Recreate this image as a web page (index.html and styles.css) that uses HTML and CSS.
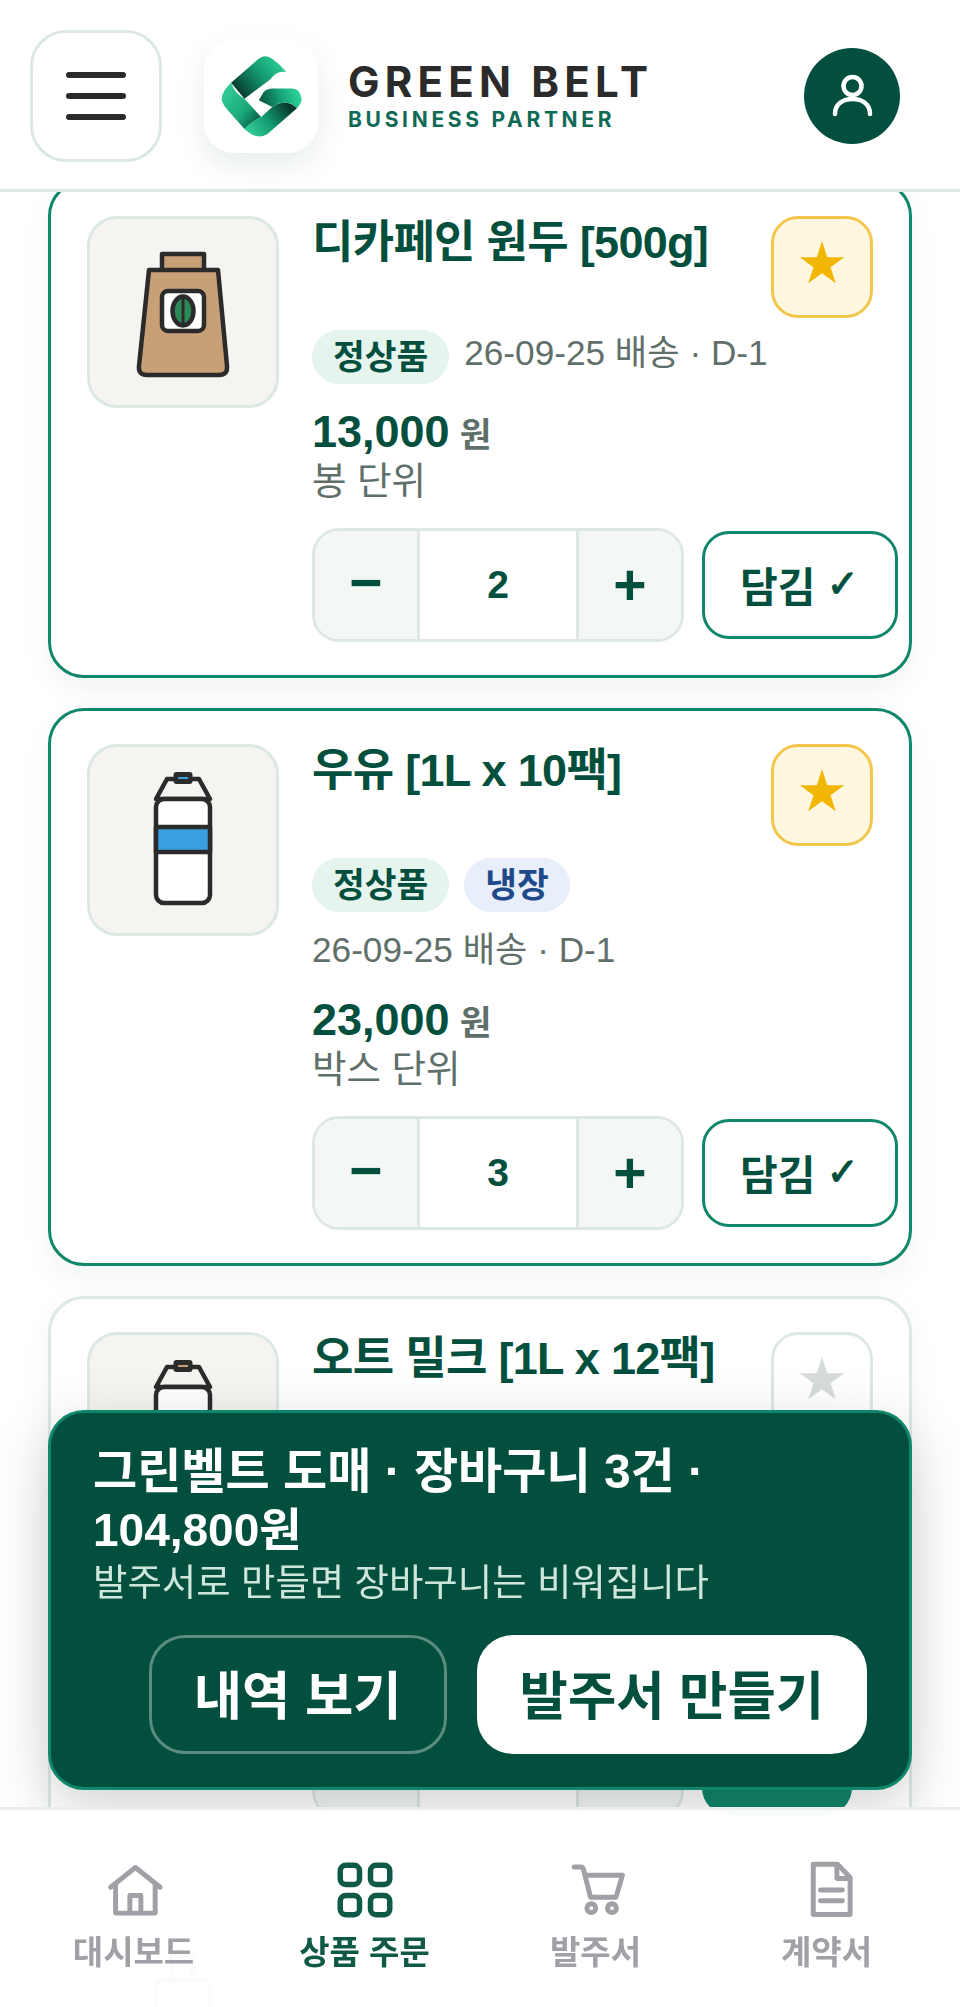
FILE: index.html
```html
<!DOCTYPE html>
<html lang="ko">

<head>
    <meta charset="UTF-8">
    <meta name="viewport" content="width=device-width, initial-scale=1.0">
    <title>Green Belt - 상품 주문</title>
    <link rel="stylesheet" href="styles.css">
</head>

<body>
    <header class="top-bar">
        <button class="menu-button" aria-label="메뉴">
            <span></span>
            <span></span>
            <span></span>
        </button>
        <div class="logo-tile">
            <svg width="81" height="81" viewBox="95 80 242 242">
                <defs>
                    <linearGradient id="gTop" gradientUnits="userSpaceOnUse" x1="270" y1="90" x2="145" y2="190">
                        <stop offset="0" stop-color="#2ecf98" />
                        <stop offset="0.45" stop-color="#149a72" />
                        <stop offset="1" stop-color="#07392c" />
                    </linearGradient>
                    <linearGradient id="gLeft" gradientUnits="userSpaceOnUse" x1="105" y1="200" x2="205" y2="275">
                        <stop offset="0" stop-color="#2fc793" />
                        <stop offset="0.6" stop-color="#1aa87a" />
                        <stop offset="1" stop-color="#0b5f48" />
                    </linearGradient>
                    <linearGradient id="gBottom" gradientUnits="userSpaceOnUse" x1="190" y1="315" x2="300" y2="235">
                        <stop offset="0" stop-color="#2fc793" />
                        <stop offset="0.45" stop-color="#149a72" />
                        <stop offset="1" stop-color="#07392c" />
                    </linearGradient>
                    <linearGradient id="gArm" gradientUnits="userSpaceOnUse" x1="330" y1="190" x2="220" y2="225">
                        <stop offset="0" stop-color="#2ed69c" />
                        <stop offset="0.55" stop-color="#169c74" />
                        <stop offset="1" stop-color="#0a5a44" />
                    </linearGradient>
                </defs>
                <path d="M125 160 L200 95 Q225 70 250 90 Q272 106 290 128 Q262 122 240 152 L165 208 Z" fill="url(#gTop)" />
                <path d="M125 160 Q92 192 98 215 Q103 230 118 245 L165 298 Q195 270 215 262 L165 208 Q135 190 125 160 Z" fill="url(#gLeft)" />
                <path d="M165 298 Q190 322 215 320 Q230 318 245 303 L322 236 Q305 218 280 220 Q262 222 248 232 L215 262 Q190 270 165 298 Z" fill="url(#gBottom)" />
                <path d="M208 212 L222 188 Q230 178 250 177 H308 Q332 178 336 208 Q336 222 322 236 Q305 218 280 220 Q262 222 248 232 Z" fill="url(#gArm)" />
            </svg>
        </div>
        <div class="brand">
            <div class="brand-name">GREEN BELT</div>
            <div class="brand-sub">BUSINESS PARTNER</div>
        </div>
        <button class="avatar" aria-label="내 정보">
            <svg width="96" height="96" viewBox="0 0 96 96" fill="none" stroke="#fff" stroke-width="4.5" stroke-linecap="round">
                <circle cx="48.5" cy="38" r="9" />
                <path d="M31 66 C31 56 39 51 48.5 51 C58 51 66 56 66 66" />
            </svg>
        </button>
    </header>

    <main class="product-list">
        <article class="product in-cart">
            <div class="product-image">
                <svg width="186" height="186" viewBox="3 3 186 186" stroke="#2b2b2b" stroke-width="4.5" stroke-linejoin="round">
                    <rect x="75" y="38" width="42" height="18" fill="#c8a078" />
                    <path d="M62 54 H131 L140 150 Q141 159 132 159 H60 Q51 159 52 150 Z" fill="#c8a078" />
                    <rect x="75" y="75" width="42" height="40" rx="6" fill="#fff" />
                    <ellipse cx="96" cy="95" rx="10.5" ry="14.5" fill="#2a8a58" />
                    <path d="M96 82 V108" fill="none" stroke-width="3" />
                </svg>
            </div>
            <div class="product-info">
                <div class="title-row">
                    <h2 class="product-title">디카페인 원두 [500g]</h2>
                    <button class="star on">★</button>
                </div>
                <div class="tag-row">
                    <span class="tag">정상품</span>
                    <span class="delivery">26-09-25 배송 · D-1</span>
                </div>
                <div class="price">13,000 <small>원</small></div>
                <div class="unit">봉 단위</div>
                <div class="actions">
                    <div class="stepper">
                        <button>−</button>
                        <span class="count">2</span>
                        <button>+</button>
                    </div>
                    <button class="add done">담김 <span class="check">✓</span></button>
                </div>
            </div>
        </article>

        <article class="product in-cart">
            <div class="product-image">
                <svg width="186" height="186" viewBox="3 3 186 186" stroke="#2b2b2b" stroke-width="4.5" stroke-linejoin="round">
                    <path d="M69 55 L80 35 H112 L123 55 Z" fill="#f5f4f0" />
                    <rect x="86.5" y="28" width="19" height="12" rx="3" fill="#2b2b2b" stroke="none" />
                    <path d="M91 34 H101" stroke="#3a9fde" stroke-width="2" />
                    <rect x="69" y="55" width="54" height="104" rx="8" fill="#fff" />
                    <rect x="69" y="83" width="54" height="25" fill="#3a9fde" />
                </svg>
            </div>
            <div class="product-info">
                <div class="title-row">
                    <h2 class="product-title">우유 [1L x 10팩]</h2>
                    <button class="star on">★</button>
                </div>
                <div class="tag-row">
                    <span class="tag">정상품</span>
                    <span class="tag cold">냉장</span>
                    <span class="delivery">26-09-25 배송 · D-1</span>
                </div>
                <div class="price">23,000 <small>원</small></div>
                <div class="unit">박스 단위</div>
                <div class="actions">
                    <div class="stepper">
                        <button>−</button>
                        <span class="count">3</span>
                        <button>+</button>
                    </div>
                    <button class="add done">담김 <span class="check">✓</span></button>
                </div>
            </div>
        </article>

        <!-- the rows of this card sit behind the cart bar -->
        <article class="product">
            <div class="product-image">
                <svg width="186" height="186" viewBox="3 3 186 186" stroke="#2b2b2b" stroke-width="4.5" stroke-linejoin="round">
                    <path d="M69 55 L80 35 H112 L123 55 Z" fill="#f5f4f0" />
                    <rect x="86.5" y="28" width="19" height="12" rx="3" fill="#2b2b2b" stroke="none" />
                    <path d="M91 34 H101" stroke="#c8a078" stroke-width="2" />
                    <rect x="69" y="55" width="54" height="104" rx="8" fill="#fff" />
                    <rect x="69" y="83" width="54" height="25" fill="#c8a078" />
                </svg>
            </div>
            <div class="product-info">
                <div class="title-row">
                    <h2 class="product-title">오트 밀크 [1L x 12팩]</h2>
                    <button class="star">★</button>
                </div>
                <div class="covered-rows"></div>
                <div class="actions">
                    <div class="stepper">
                        <button aria-label="빼기"></button>
                        <span class="count"></span>
                        <button aria-label="더하기"></button>
                    </div>
                    <button class="add" aria-label="담기"></button>
                </div>
            </div>
        </article>

        <article class="product">
            <div class="product-image">
                <svg width="186" height="186" viewBox="3 3 186 186" stroke="#2b2b2b" stroke-width="4.5" stroke-linejoin="round">
                    <rect x="85" y="36" width="21" height="24" fill="#fff" />
                    <rect x="69" y="60" width="54" height="100" rx="8" fill="#fff" />
                </svg>
            </div>
        </article>
    </main>

    <section class="cart-bar">
        <div class="cart-title">그린벨트 도매 · 장바구니 3건 · <span class="cart-total">104,800원</span></div>
        <div class="cart-note">발주서로 만들면 장바구니는 비워집니다</div>
        <div class="cart-buttons">
            <button class="cart-history">내역 보기</button>
            <button class="cart-order">발주서 만들기</button>
        </div>
    </section>

    <nav class="bottom-nav">
        <a class="nav-item">
            <svg width="66" height="66" viewBox="0 0 24 24" fill="none" stroke="currentColor" stroke-width="1.8" stroke-linecap="round" stroke-linejoin="round">
                <path d="M3.5 11 L12.5 3.8 L21.5 11" />
                <path d="M5.3 10 V20.4 H19.7 V10" />
                <path d="M10.5 20.4 V14 H14.5 V20.4" />
            </svg>
            대시보드
        </a>
        <a class="nav-item active">
            <svg width="66" height="66" viewBox="0 0 24 24" fill="none" stroke="currentColor" stroke-width="2">
                <rect x="3" y="3" width="7" height="7" rx="2" />
                <rect x="14" y="3" width="7" height="7" rx="2" />
                <rect x="3" y="14" width="7" height="7" rx="2" />
                <rect x="14" y="14" width="7" height="7" rx="2" />
            </svg>
            상품 주문
        </a>
        <a class="nav-item">
            <svg width="66" height="66" viewBox="0 0 24 24" fill="none" stroke="currentColor" stroke-width="1.8" stroke-linecap="round" stroke-linejoin="round">
                <path d="M4 3.6 H6.5 Q7.2 3.6 7.4 4.4 L10 14.6 H19.3 L21.6 6.6 H8.2" />
                <circle cx="10.3" cy="18.6" r="1.6" />
                <circle cx="17.8" cy="18.6" r="1.6" />
            </svg>
            발주서
        </a>
        <a class="nav-item">
            <svg width="66" height="66" viewBox="0 0 24 24" fill="none" stroke="currentColor" stroke-width="1.8" stroke-linecap="round" stroke-linejoin="round">
                <path d="M7 2.6 H15.8 L20.4 7.4 V20.9 H7 Z" />
                <path d="M15.6 3 V7.8 H20" />
                <path d="M9.6 12 H17.6" />
                <path d="M9.6 15.9 H17.6" />
            </svg>
            계약서
        </a>
    </nav>
</body>

</html>
```

FILE: styles.css
```css
html,
body {
    height: 100%;
    margin: 0;
    overflow: hidden;
}

body {
    font-family: "Liberation Sans", "Noto Sans CJK KR", sans-serif;
    background-color: #fff;
    color: #034f3d;
}

button {
    font-family: inherit;
    padding: 0;
    cursor: pointer;
}

/* header */
.top-bar {
    position: fixed;
    top: 0;
    left: 0;
    right: 0;
    z-index: 5;
    display: flex;
    align-items: center;
    padding: 30px 60px 27px 30px;
    background: #fff;
    border-bottom: 3px solid #dde8e4;
}

.menu-button {
    width: 132px;
    height: 132px;
    display: flex;
    flex-direction: column;
    align-items: center;
    justify-content: center;
    gap: 15px;
    background: #fff;
    border: 3px solid #dde8e4;
    border-radius: 36px;
}

.menu-button span {
    width: 60px;
    height: 6px;
    background: #2b2b2b;
    border-radius: 3px;
}

.logo-tile {
    width: 114px;
    height: 114px;
    margin-left: 42px;
    display: flex;
    align-items: center;
    justify-content: center;
    background: #fff;
    border-radius: 30px;
    box-shadow: 0 12px 30px rgba(3, 79, 61, 0.1);
}

.brand {
    margin-left: 30px;
    font-family: Inter, sans-serif;
}

.brand-name {
    font-size: 42px;
    line-height: 46px;
    font-weight: 700;
    letter-spacing: 5.2px;
    color: #2b2b2b;
}

.brand-sub {
    font-size: 21px;
    line-height: 29px;
    font-weight: 700;
    letter-spacing: 3.7px;
    color: #0f6b55;
}

.avatar {
    width: 96px;
    height: 96px;
    margin-left: auto;
    display: flex;
    background: #034f3d;
    border: none;
    border-radius: 50%;
}

/* product cards */
.product-list {
    height: 100%;
    box-sizing: border-box;
    overflow: hidden;
    display: flex;
    flex-direction: column;
    gap: 30px;
    padding: 180px 48px 0;
}

.product {
    flex: none;
    display: flex;
    gap: 33px;
    padding: 33px 36px;
    background: #fff;
    border: 3px solid #dde8e4;
    border-radius: 36px;
    box-shadow: 0 12px 30px rgba(3, 79, 61, 0.06);
}

.product.in-cart {
    border-color: #10876a;
}

.product-image {
    flex: none;
    width: 186px;
    height: 186px;
    background: #f5f4f0;
    border: 3px solid #dde8e4;
    border-radius: 30px;
}

.product-image svg {
    display: block;
}

.product-info {
    flex: 1;
    min-width: 0;
}

.title-row {
    display: flex;
    justify-content: space-between;
    align-items: flex-start;
}

.product-title {
    margin: 0;
    font-size: 45px;
    line-height: 54px;
    font-weight: 700;
    letter-spacing: -0.7px;
}

.star {
    flex: none;
    width: 102px;
    height: 102px;
    padding-bottom: 8px;
    font-family: "DejaVu Sans", sans-serif;
    font-size: 58px;
    color: #d5dcd9;
    background: #fff;
    border: 3px solid #dde8e4;
    border-radius: 27px;
}

.star.on {
    color: #f2b705;
    background: #fff7e0;
    border-color: #f3c64d;
}

.tag-row {
    display: flex;
    flex-wrap: wrap;
    align-items: flex-start;
    gap: 15px;
    margin-top: 12px;
}

.tag {
    height: 54px;
    padding: 0 21px;
    font-size: 34.5px;
    line-height: 54px;
    font-weight: 700;
    background: #e6f4ee;
    border-radius: 27px;
}

.tag.cold {
    color: #1f4a8a;
    background: #e8effb;
}

.delivery {
    font-size: 35.2px;
    line-height: 45px;
    color: #5f6f6a;
}

.price {
    margin-top: 21px;
    font-size: 45px;
    line-height: 54px;
    font-weight: 700;
}

.price small {
    margin-left: -2.5px;
    font-size: 34.5px;
    line-height: 1;
    color: #5f6f6a;
}

.unit {
    font-size: 37.5px;
    line-height: 45px;
    color: #5f6f6a;
}

.covered-rows {
    height: 246px;
}

.actions {
    display: flex;
    align-items: center;
    gap: 18px;
    margin-top: 24px;
}

.stepper {
    flex: none;
    width: 372px;
    height: 114px;
    box-sizing: border-box;
    display: flex;
    background: #fff;
    border: 3px solid #dde8e4;
    border-radius: 27px;
    overflow: hidden;
}

.stepper button {
    flex: none;
    width: 102px;
    font-size: 57px;
    font-weight: 700;
    color: #034f3d;
    background: #f3f7f5;
    border: none;
}

.stepper button:first-child {
    padding-bottom: 6px;
}

.count {
    flex: 1;
    font-size: 39px;
    line-height: 108px;
    font-weight: 700;
    text-align: center;
    border-left: 3px solid #dde8e4;
    border-right: 3px solid #dde8e4;
}

.add {
    flex: none;
    width: 150px;
    height: 108px;
    font-size: 41px;
    font-weight: 700;
    color: #fff;
    background: #10876a;
    border: none;
    border-radius: 27px;
}

.add.done {
    width: auto;
    padding: 0 36px 3px 35px;
    color: #034f3d;
    background: #fff;
    border: 3px solid #10876a;
}

.check {
    font-family: "DejaVu Sans", sans-serif;
    font-size: 38px;
    vertical-align: 5px;
    -webkit-text-stroke: 1.2px #034f3d;
}

/* cart summary */
.cart-bar {
    position: fixed;
    left: 48px;
    right: 48px;
    bottom: 217px;
    z-index: 3;
    padding: 30px 42px 33px;
    color: #fff;
    background: #034f3d;
    border: 3px solid #10876a;
    border-radius: 36px;
    box-shadow: 0 18px 60px rgba(0, 0, 0, 0.18);
}

.cart-title {
    font-size: 48px;
    line-height: 57.6px;
    font-weight: 700;
}

.cart-total {
    font-size: 46px;
}

.cart-note {
    margin-top: 1.8px;
    font-size: 37.4px;
    line-height: 45px;
    color: #cfe6dc;
}

.cart-buttons {
    display: flex;
    justify-content: flex-end;
    gap: 30px;
    margin-top: 29px;
}

.cart-buttons button {
    height: 119px;
    padding: 0 42px 6px;
    font-size: 52.5px;
    font-weight: 700;
    border-radius: 36px;
}

.cart-history {
    color: #fff;
    background: transparent;
    border: 3px solid rgba(255, 255, 255, 0.35);
}

.cart-order {
    color: #034f3d;
    background: #fff;
    border: none;
}

.cart-buttons .cart-order {
    padding: 0 43px 6px;
}

/* bottom navigation */
.bottom-nav {
    position: fixed;
    left: 0;
    right: 0;
    bottom: 0;
    z-index: 4;
    height: 200px;
    box-sizing: border-box;
    display: grid;
    grid-template-columns: repeat(4, 1fr);
    padding: 47px 18px 0;
    background: rgba(255, 255, 255, 0.98);
    border-top: 3px solid #e9eeec;
}

.nav-item {
    display: flex;
    flex-direction: column;
    align-items: center;
    gap: 9px;
    font-size: 33px;
    line-height: 42px;
    font-weight: 700;
    color: #a0a0a6;
}

.nav-item.active {
    color: #0f5a46;
}
```
